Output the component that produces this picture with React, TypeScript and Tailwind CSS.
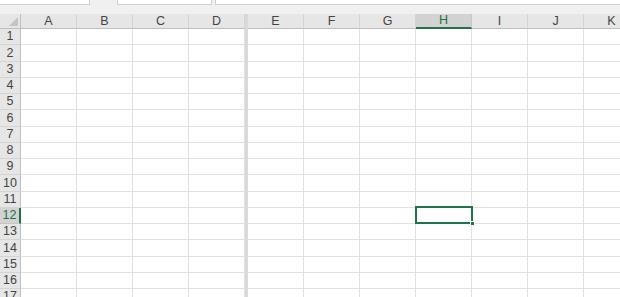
import * as React from 'react';

const LEFT_COLS = ['A', 'B', 'C', 'D'];
const RIGHT_COLS = ['E', 'F', 'G', 'H', 'I', 'J', 'K'];
const ROWS = Array.from({ length: 17 }, (_, i) => i + 1);

const ACTIVE_COL = 'H';
const ACTIVE_ROW = 12;

// one column header cell
const ColHeader = ({ label }: { label: string }) => {
  const active = label === ACTIVE_COL;
  return (
    <div
      className={
        active
          ? 'w-[56px] shrink-0 h-full flex items-center justify-center border-r border-[#c6c6c6] border-b-2 border-b-[#217346] bg-[#d2d2d2] text-[#217346]'
          : 'w-[56px] shrink-0 h-full flex items-center justify-center border-r border-[#d4d4d4] border-b border-b-[#bfbfbf] text-[#444]'
      }
    >
      {label}
    </div>
  );
};

const SplitBar = () => <div className="w-[3px] shrink-0 h-full bg-[#d9d9d9]" />;

export default function App() {
  return (
    <div className="w-[620px] h-[297px] overflow-hidden bg-white font-['Liberation_Sans','Noto_Sans',sans-serif] text-[12.5px] leading-none select-none">
      {/* formula bar remains */}
      <div className="h-[14px] bg-[#f0f0f0] flex items-start">
        <div className="w-[90px] h-[5px] bg-white border-r border-b border-[#d0d0d0]" />
        <div className="ml-[27px] w-[95px] h-[5px] bg-white border-x border-b border-[#d0d0d0]" />
        <div className="ml-[3px] flex-1 h-[5px] bg-white border-l border-b border-[#d0d0d0]" />
      </div>

      {/* column headers */}
      <div className="h-[15px] flex bg-[#e6e6e6]">
        <div className="w-[21px] shrink-0 h-full relative border-r border-b border-[#bfbfbf]">
          <svg className="absolute right-[2px] bottom-[2px]" width="9" height="9" viewBox="0 0 9 9">
            <polygon points="9,0 9,9 0,9" fill="#c3c3c3" />
          </svg>
        </div>
        {LEFT_COLS.map((c) => (
          <ColHeader key={c} label={c} />
        ))}
        <SplitBar />
        {RIGHT_COLS.map((c) => (
          <ColHeader key={c} label={c} />
        ))}
      </div>

      {/* sheet body */}
      <div className="relative">
        {ROWS.map((r) => {
          const active = r === ACTIVE_ROW;
          return (
            <div key={r} className="h-[16.25px] flex">
              <div
                className={
                  active
                    ? 'w-[21px] shrink-0 h-full flex items-center justify-center bg-[#d2d2d2] text-[#217346] border-r-2 border-r-[#217346] border-b border-b-[#c6c6c6]'
                    : 'w-[21px] shrink-0 h-full flex items-center justify-center bg-[#e6e6e6] text-[#444] border-r border-r-[#bfbfbf] border-b border-b-[#d4d4d4]'
                }
              >
                {r}
              </div>
              {LEFT_COLS.map((c) => (
                <div key={c} className="w-[56px] shrink-0 h-full border-r border-b border-[#e1e1e1]" />
              ))}
              <SplitBar />
              {RIGHT_COLS.map((c) => (
                <div key={c} className="w-[56px] shrink-0 h-full border-r border-b border-[#e1e1e1]" />
              ))}
            </div>
          );
        })}

        {/* active cell H12 */}
        <div className="absolute left-[415px] top-[177px] w-[58px] h-[18px] border-2 border-[#217346]">
          <div className="absolute -right-[4px] -bottom-[4px] w-[5px] h-[5px] bg-[#217346] border border-white" />
        </div>
      </div>
    </div>
  );
}
